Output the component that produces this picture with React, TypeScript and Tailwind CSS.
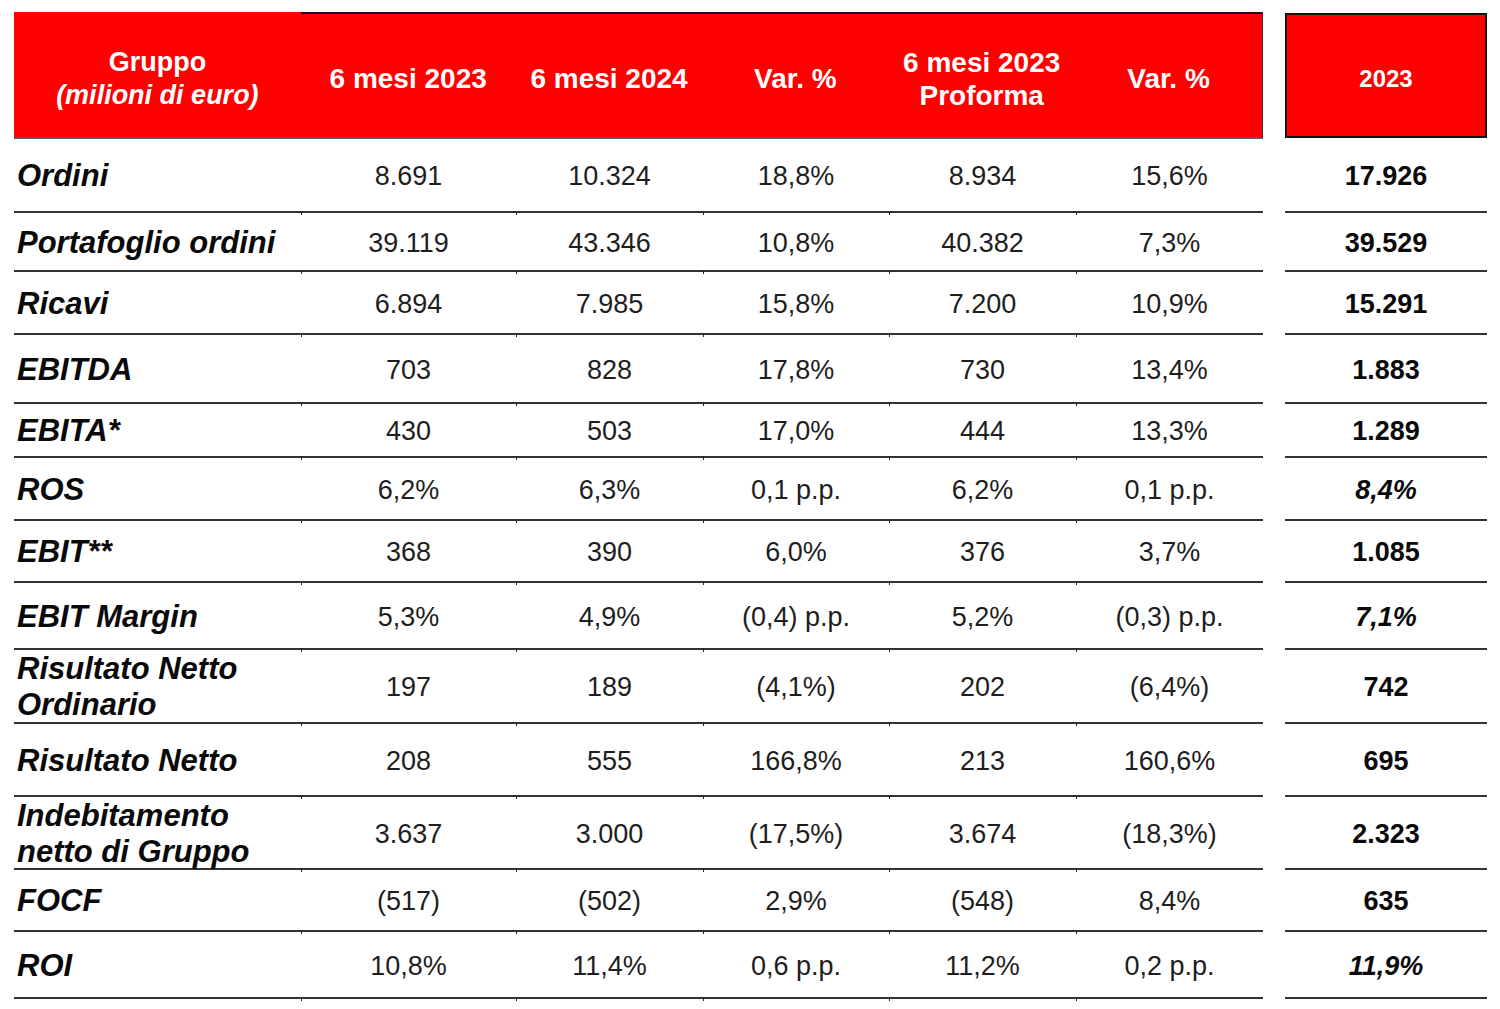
import React from "react";

type Row = {
  label: string[];
  vals: string[];
  last: string;
  lastItalic?: boolean;
  h: string;
};

const rows: Row[] = [
  { label: ["Ordini"], vals: ["8.691", "10.324", "18,8%", "8.934", "15,6%"], last: "17.926", h: "h-[74px]" },
  { label: ["Portafoglio ordini"], vals: ["39.119", "43.346", "10,8%", "40.382", "7,3%"], last: "39.529", h: "h-[59px]" },
  { label: ["Ricavi"], vals: ["6.894", "7.985", "15,8%", "7.200", "10,9%"], last: "15.291", h: "h-[63px]" },
  { label: ["EBITDA"], vals: ["703", "828", "17,8%", "730", "13,4%"], last: "1.883", h: "h-[69px]" },
  { label: ["EBITA*"], vals: ["430", "503", "17,0%", "444", "13,3%"], last: "1.289", h: "h-[54px]" },
  { label: ["ROS"], vals: ["6,2%", "6,3%", "0,1 p.p.", "6,2%", "0,1 p.p."], last: "8,4%", lastItalic: true, h: "h-[63px]" },
  { label: ["EBIT**"], vals: ["368", "390", "6,0%", "376", "3,7%"], last: "1.085", h: "h-[62px]" },
  { label: ["EBIT Margin"], vals: ["5,3%", "4,9%", "(0,4) p.p.", "5,2%", "(0,3) p.p."], last: "7,1%", lastItalic: true, h: "h-[67px]" },
  { label: ["Risultato Netto", "Ordinario"], vals: ["197", "189", "(4,1%)", "202", "(6,4%)"], last: "742", h: "h-[74px]" },
  { label: ["Risultato Netto"], vals: ["208", "555", "166,8%", "213", "160,6%"], last: "695", h: "h-[73px]" },
  { label: ["Indebitamento", "netto di Gruppo"], vals: ["3.637", "3.000", "(17,5%)", "3.674", "(18,3%)"], last: "2.323", h: "h-[73px]" },
  { label: ["FOCF"], vals: ["(517)", "(502)", "2,9%", "(548)", "8,4%"], last: "635", h: "h-[62px]" },
  { label: ["ROI"], vals: ["10,8%", "11,4%", "0,6 p.p.", "11,2%", "0,2 p.p."], last: "11,9%", lastItalic: true, h: "h-[67px]" },
];

const colW = ["w-[215px]", "w-[187px]", "w-[186px]", "w-[187px]", "w-[187px]"];

function Tick() {
  return <span className="absolute left-0 -bottom-[4px] w-px h-[4px] bg-[#222]" />;
}

export default function App() {
  return (
    <div
      className="w-[1500px] h-[1009px] bg-white pt-[12px] pl-[14px] overflow-hidden"
      style={{ fontFamily: '"Liberation Sans", Arial, sans-serif' }}
    >
      {/* header */}
      <div className="flex h-[127px]">
        <div className="w-[1249px] flex bg-[#ff0000] border-b-2 border-[#5a5a5a] border-r border-r-[#333] text-white font-bold text-[28px]">
          <div className="w-[287px] flex flex-col items-center justify-center leading-[33px] pt-[8px] text-[27px]">
            <span>Gruppo</span>
            <span className="italic">(milioni di euro)</span>
          </div>
          <div className={`${colW[0]} flex items-center justify-center border-t-2 border-[#111] pt-[6px]`}>
            6 mesi 2023
          </div>
          <div className={`${colW[1]} flex items-center justify-center border-t-2 border-[#111] pt-[6px]`}>
            6 mesi 2024
          </div>
          <div className={`${colW[2]} flex items-center justify-center border-t-2 border-[#111] pt-[6px]`}>
            Var. %
          </div>
          <div className={`${colW[3]} flex flex-col items-center justify-center leading-[33px] border-t-2 border-[#111] pt-[6px]`}>
            <span>6 mesi 2023</span>
            <span>Proforma</span>
          </div>
          <div className={`${colW[4]} flex items-center justify-center border-t-2 border-[#111] pt-[6px]`}>
            Var. %
          </div>
        </div>
        <div className="w-[22px]" />
        <div className="w-[202px] mt-[1px] h-[125px] bg-[#ff0000] border-2 border-[#111] flex items-center justify-center text-white font-bold text-[24px] pt-[6px]">
          2023
        </div>
      </div>

      {rows.map((r, i) => (
        <div key={i} className={`flex ${r.h}`}>
          <div className="w-[1249px] flex border-b-2 border-[#333]">
            <div className="w-[287px] flex flex-col justify-center pl-[3px] font-bold italic text-[31px] leading-[36px] text-[#0a0a0a] pt-[2px]">
              {r.label.map((l, j) => (
                <span key={j} className="whitespace-nowrap">{l}</span>
              ))}
            </div>
            {r.vals.map((v, j) => (
              <div
                key={j}
                className={`${colW[j]} relative flex items-center justify-center text-[27px] text-[#1e1e1e] pt-[3px]`}
              >
                {v}
                <Tick />
              </div>
            ))}
          </div>
          <div className="w-[22px]" />
          <div
            className={`w-[202px] flex items-center justify-center border-b-2 border-[#333] text-[27px] font-bold text-[#0a0a0a] pt-[3px] ${
              r.lastItalic ? "italic" : ""
            }`}
          >
            {r.last}
          </div>
        </div>
      ))}
    </div>
  );
}
